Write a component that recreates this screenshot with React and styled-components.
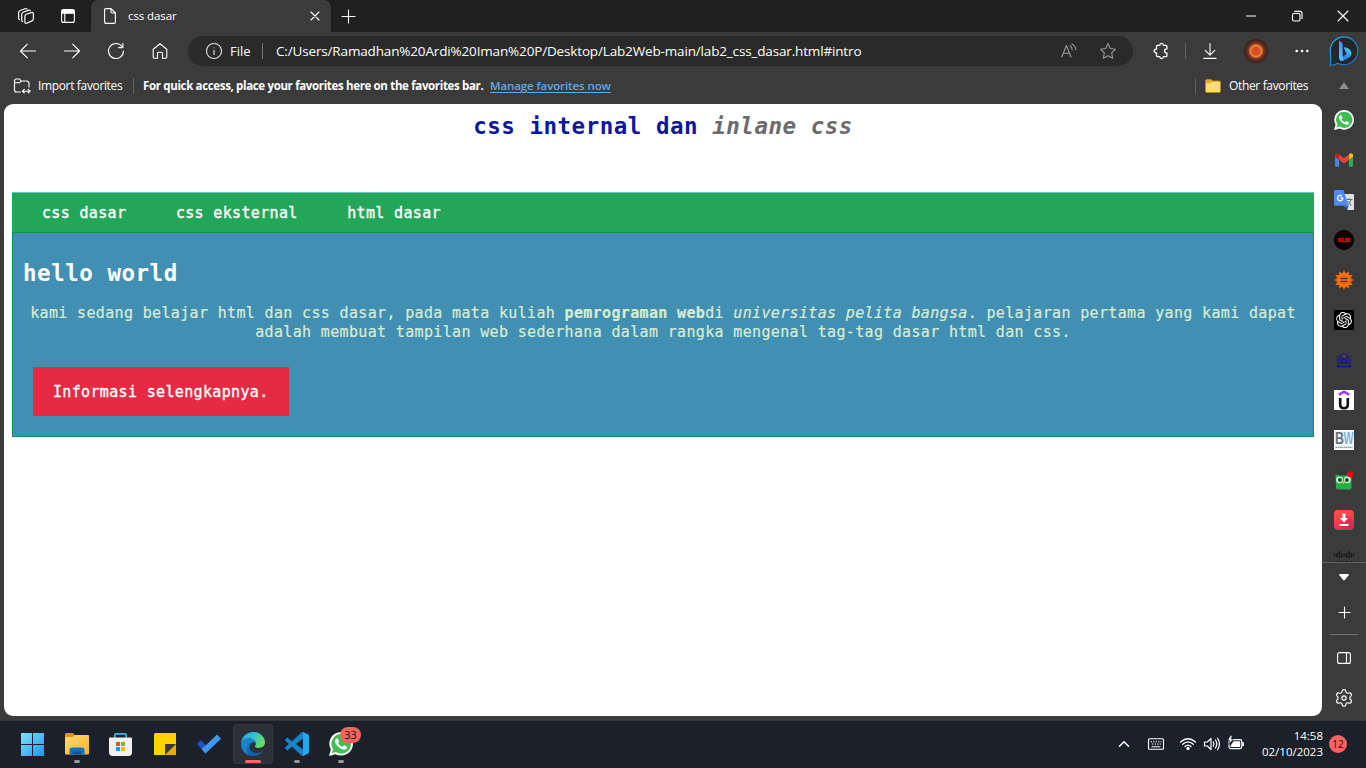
import React from 'react';
import styled, { createGlobalStyle, css } from 'styled-components';
import { SiOpenai } from 'react-icons/si';

const Global = createGlobalStyle`
  *, *::before, *::after { box-sizing: border-box; }
  html, body { margin: 0; padding: 0; background: #3b3b3b; overflow: hidden; }
  svg { display: block; flex: none; overflow: visible; }
`;

const UI = `"Open Sans", "Noto Sans", sans-serif`;
const MONO = `"DejaVu Sans Mono", monospace`;

const Screen = styled.div`
  width: 1366px;
  height: 768px;
  display: grid;
  grid-template-rows: 32px 38px 34px 616px 48px;
  background: #3b3b3b;
  color: #fff;
  font-family: ${UI};
  font-size: 12px;
`;

const Label = styled.span`
  white-space: nowrap;
  font-size: ${(p) => p.$size || 12}px;
  font-weight: ${(p) => p.$weight || 400};
  letter-spacing: ${(p) => p.$track || 0}px;
  color: ${(p) => p.$color || '#fff'};
  line-height: 16px;
`;

const Spacer = styled.div`
  flex: 1;
`;

const Slot = styled.div`
  width: ${(p) => p.$w || 44}px;
  height: ${(p) => p.$h || 32}px;
  flex: none;
  display: flex;
  align-items: center;
  justify-content: center;
`;

const Divider = styled.div`
  width: 1px;
  height: 16px;
  flex: none;
  margin-left: ${(p) => p.$left || 0}px;
  background: ${(p) => p.$color || '#606060'};
`;

/* Tab strip */
const TabStrip = styled.header`
  display: flex;
  background: #202020;
  padding-left: 5px;
`;

const Tab = styled.div`
  width: 240px;
  margin-left: 2px;
  padding: 0 9px 0 13px;
  display: flex;
  align-items: center;
  background: #3b3b3b;
  border-radius: 7px 7px 0 0;
  box-shadow: 0 0 3px rgba(0, 0, 0, 0.45);
  clip-path: inset(0 -4px 0 -4px);
`;

const TabTitle = styled(Label)`
  margin-left: 12px;
  flex: 1;
`;

/* Toolbar */
const Toolbar = styled.div`
  display: flex;
  align-items: center;
  padding-left: 6px;
`;

const AddressBar = styled.div`
  width: 945px;
  height: 30px;
  margin: 0 6px;
  padding: 0 5px 0 18px;
  display: flex;
  align-items: center;
  border-radius: 15px;
  background: #2a2a2a;
`;

const Scheme = styled(Label)`
  margin: 0 10px 0 8px;
  width: 22px;
`;

const Url = styled(Label)`
  margin-left: 13px;
  flex: 1;
`;

const Avatar = styled.div`
  width: 24px;
  height: 24px;
  border-radius: 50%;
  background: radial-gradient(circle, #d94f22 0 4px, #f0903c 5.5px, #a2451f 7px, #5c2c20 9px, #35211f 12px);
`;

/* Favorites bar */
const FavoritesBar = styled.div`
  display: flex;
  align-items: center;
  padding: 0 14px 2px 14px;
`;

const ImportLabel = styled(Label)`
  width: 85px;
  margin: 0 10px 0 8px;
`;

const Hint = styled(Label)`
  width: 341px;
  margin: 0 6px 0 9px;
`;

const ManageLink = styled(Label)`
  text-decoration: underline;
  text-underline-offset: 2px;
`;

const OtherLabel = styled(Label)`
  width: 80px;
  margin: 0 30px 0 8px;
`;

/* Main area */
const Main = styled.div`
  display: flex;
  padding-left: 4px;
`;

const Page = styled.main`
  width: 1318px;
  height: 612px;
  padding: 0 8px;
  border-radius: 9px;
  background: #fff;
  font-family: ${MONO};
  font-size: 15px;
  letter-spacing: 0.344px;
`;

const PageTitle = styled.h1`
  margin: 0;
  height: 88px;
  padding-top: 8px;
  text-align: center;
  color: #0b179d;
  font-size: 22.5px;
  line-height: 28px;
  letter-spacing: 0.517px;

  i { color: #6b6b6b; }
`;

const Nav = styled.nav`
  height: 40px;
  padding: 2px 0 0 30px;
  display: flex;
  gap: 49.5px;
  align-items: center;
  border-top: 1px solid #6cc3d0;
  background: #22a75a;
`;

const NavLink = styled.a`
  color: #fff;
  -webkit-text-stroke: 0.35px #fff;
  line-height: 19px;
`;

const Hero = styled.section`
  height: 205px;
  padding: 0 10px;
  border: 1px solid #0e9150;
  background: #418fb2;
`;

const HeroTitle = styled.h2`
  margin: 0;
  padding-top: 26px;
  font-size: 22.5px;
  line-height: 28px;
  letter-spacing: 0.517px;
`;

const HeroText = styled.p`
  margin: 17px 0 25px;
  text-align: center;
  line-height: 19px;
  color: #d8ecd2;
  -webkit-text-stroke: 0.2px #d8ecd2;
`;

const HeroButton = styled.a`
  display: inline-flex;
  align-items: center;
  height: 49px;
  width: 256px;
  margin-left: 10px;
  padding-left: 20px;
  background: #e42b43;
  color: #fff;
  white-space: nowrap;
  -webkit-text-stroke: 0.35px #fff;
`;

/* Side bar */
const SideBar = styled.aside`
  width: 44px;
  display: flex;
  flex-direction: column;
  align-items: center;
`;

const SideApps = styled.div`
  width: 44px;
  height: 459px;
  padding-top: 6px;
  display: flex;
  flex-direction: column;
  align-items: center;
  gap: 20px;
  overflow: hidden;
  border-bottom: 1px solid #626262;
`;

const SideRule = styled.div`
  width: 28px;
  height: 1px;
  background: #757575;
`;

/* Taskbar */
const TaskBar = styled.footer`
  display: flex;
  align-items: center;
  padding: 0 0 1px 13px;
  background: #1c202a;
  border-top: 1px solid #34373c;
`;

const TaskButton = styled.div`
  position: relative;
  width: 40px;
  height: 40px;
  margin-right: 4px;
  display: flex;
  align-items: center;
  justify-content: center;
  border-radius: 4px;
  ${(p) => p.$active && css`
    background: #2d3039;
    box-shadow: inset 0 0 0 1px #353841;
  `}
`;

const Indicator = styled.span`
  position: absolute;
  bottom: 1px;
  left: 50%;
  transform: translateX(-50%);
  width: ${(p) => (p.$active ? 16 : 6)}px;
  height: 3px;
  border-radius: 2px;
  background: ${(p) => (p.$active ? '#fb6a66' : '#95979b')};
`;

const CountBadge = styled.span`
  position: absolute;
  top: 3px;
  left: 19px;
  width: 21px;
  height: 16px;
  border-radius: 8px;
  background: #fb6360;
  color: #1a0d0d;
  font-size: 11px;
  line-height: 16px;
  text-align: center;
`;

const Clock = styled.div`
  width: 71px;
  margin-left: 4px;
  display: flex;
  flex-direction: column;
  align-items: flex-end;
`;

const Notice = styled.div`
  width: 18px;
  height: 18px;
  margin: 0 19px 0 6px;
  border-radius: 50%;
  background: #fb6360;
  color: #1a0d0d;
  font-size: 10px;
  line-height: 18px;
  text-align: center;
`;

const Line = ({ size = 16, width = 1.1, color = '#fff', box, children }) => (
  <svg width={size} height={size} viewBox={`0 0 ${box || size} ${box || size}`} fill="none" stroke={color}
    strokeWidth={width} strokeLinecap="round" strokeLinejoin="round">{children}</svg>
);

const HANDSET = 'M17.472 14.382c-.297-.149-1.758-.867-2.03-.967-.273-.099-.471-.148-.67.15-.197.297-.767.966-.94 1.164-.173.199-.347.223-.644.075-.297-.15-1.255-.463-2.39-1.475-.883-.788-1.48-1.761-1.653-2.059-.173-.297-.018-.458.13-.606.134-.133.298-.347.446-.52.149-.174.198-.298.298-.497.099-.198.05-.371-.025-.52-.075-.149-.669-1.612-.916-2.207-.242-.579-.487-.5-.669-.51-.173-.008-.371-.01-.57-.01-.198 0-.52.074-.792.372-.272.297-1.04 1.016-1.04 2.479 0 1.462 1.065 2.875 1.213 3.074.149.198 2.096 3.2 5.077 4.487.709.306 1.262.489 1.694.625.712.227 1.36.195 1.871.118.571-.085 1.758-.719 2.006-1.413.248-.694.248-1.289.173-1.413-.074-.124-.272-.198-.57-.347';

const WhatsApp = ({ size }) => (
  <svg width={size} height={size} viewBox="0 0 24 24">
    <path d="M12.2 0A11.8 11.8 0 0 0 1.9 17.6L0 24l6.6-1.8A11.8 11.8 0 1 0 12.2 0z" fill="#fff" />
    <path d="M12.2 2.1A9.7 9.7 0 0 0 4.1 17.2L3 21l4-1.1A9.7 9.7 0 1 0 12.2 2.1z" fill="#40bd53" />
    <path d={HANDSET} fill="#fff" />
  </svg>
);

const Workspaces = () => (
  <Line size={16} width={1.2}>
    <path d="M8.2 6.3 13.4 4.6Q15.6 4 15.400 6V11.200Q15.200 12.400 14 12.900L8.700 15.200Q6.800 15.800 6.900 13.700V8.200Q7 6.800 8.200 6.300Z" />
    <path d="M4.700 13.600Q3.500 13.200 3.700 11.800V6.300Q3.800 4.700 5.200 4.200L10 2.400Q11.500 1.900 12.300 2.700" />
    <path d="M1.600 11.600Q.4 11 .6 9.600V4.600Q.7 3 2.100 2.500L7 .7Q8.300.3 9 .9" />
  </Line>
);
const TabActions = () => (
  <Line size={14}>
    <rect x=".6" y=".6" width="12.8" height="12.8" rx="2" />
    <path d="M1 1.2h12v3H1z" fill="#fff" /><path d="M3.8 4v9" />
  </Line>
);
const DocIcon = () => (
  <svg width="12" height="16" viewBox="0 0 12 16" fill="none" stroke="#fff" strokeWidth="1.1" strokeLinejoin="round">
    <path d="M2 .6H7L11.4 5V14Q11.4 15.4 10 15.4H2Q.6 15.4 .6 14V2Q.6 .6 2 .6ZM7 .6V3.8Q7 5 8.2 5H11.4" />
  </svg>
);
const Cross = ({ size = 8 }) => <Line size={size}><path d={`M0 0 ${size} ${size}M${size} 0 0 ${size}`} /></Line>;
const Plus = ({ size = 13 }) => <Line size={size}><path d={`M${size / 2} 0V${size}M0 ${size / 2}H${size}`} /></Line>;
const Restore = () => (
  <Line size={10}>
    <rect x=".5" y="2.500" width="7.500" height="7.500" rx="1.500" />
    <path d="M2.700.4H8Q10 .4 10 2.400V7.600" />
  </Line>
);
const Arrow = ({ flip }) => (
  <Line size={16}><path d={flip ? 'M.5 8H15.500M8.700 1.200 15.500 8 8.700 14.800' : 'M15.500 8H.5M7.300 1.200.5 8 7.300 14.800'} /></Line>
);
const Refresh = () => (
  <Line size={16}><path d="M14.200 3.800A7.500 7.500 0 1 0 15.500 8M14.900.4V4.600H10.600" /></Line>
);
const Home = () => (
  <Line size={16}>
    <path d="M1.200 6.300 8 .8 14.800 6.300V14Q14.800 15.200 13.700 15.200H10.500V10.500Q10.500 9.300 9.400 9.300H6.600Q5.500 9.300 5.500 10.500V15.200H2.300Q1.200 15.200 1.200 14Z" />
  </Line>
);
const Info = () => (
  <Line size={16} color="#e4e4e4"><circle cx="8" cy="8" r="7.500" /><path d="M8 7.300V11.500M8 4.700V4.800" /></Line>
);
const ReadAloud = () => (
  <Line size={16} color="#9a9a9a">
    <path d="M.8 14 5.400 2.500 10 14M2.400 10.200H8.400M9 2.800Q10.900 4.200 11.200 6.800M11 .9Q14.600 3 14.900 6.800" />
  </Line>
);
const Star = () => (
  <Line size={16} color="#9a9a9a">
    <path d="M8 .6 10.250 5.500 15.500 6.200 11.700 9.900 12.600 15.200 8 12.700 3.400 15.200 4.300 9.900.5 6.200 5.750 5.500Z" />
  </Line>
);
const Puzzle = () => (
  <Line size={16} width={1.300}>
    <path d="M4.700 2.300H6.800Q6.900.4 8.600.4T10.400 2.300H12.700Q13.900 2.300 13.900 3.500V5.900Q11.500 5.900 11.500 8T13.900 10.100V12.500Q13.900 13.700 12.700 13.700H10.400Q10.300 15.500 8.600 15.500T6.800 13.700H4.700Q3.500 13.700 3.500 12.500V9.900Q1.100 9.700 1.100 8T3.500 6.100V3.500Q3.500 2.300 4.700 2.300Z" />
  </Line>
);
const Download = () => (
  <Line size={16}><path d="M8 .5V12M3.200 7.300 8 12.100 12.800 7.300" color="#d0d0d0" /><path d="M2 15.400H14" strokeWidth="1.300" /></Line>
);
const Dots = () => (
  <svg width="14" height="4" viewBox="0 0 14 4" fill="#fff"><circle cx="1.700" cy="2" r="1.300" /><circle cx="7" cy="2" r="1.300" /><circle cx="12.300" cy="2" r="1.300" /></svg>
);
const Bing = () => (
  <svg width="30" height="30" viewBox="0 0 30 30">
    <defs>
      <linearGradient id="ring" x1="0" y1="0" x2="1" y2="1"><stop stopColor="#25b7dc" /><stop offset="1" stopColor="#2457d8" /></linearGradient>
      <linearGradient id="bee" x1="0" y1="1" x2="1" y2="0"><stop stopColor="#2a64f0" /><stop offset=".5" stopColor="#358df2" /><stop offset="1" stopColor="#3ff0dd" /></linearGradient>
      <linearGradient id="stem" x1="0" y1="0" x2="0" y2="1"><stop stopColor="#2a9df4" /><stop offset="1" stopColor="#56c6f6" /></linearGradient>
    </defs>
    <path d="M15.300 .8A14 14 0 1 1 8.500 27.300 Q5 29.500 1 29.200 2.200 25 1.400 17A14 14 0 0 1 15.300 .8Z" fill="#242628" stroke="url(#ring)" strokeWidth="1.200" />
    <path d="M14.800 11.700Q15 11 16 11.300 22.500 13 22.500 17.500 22.500 20 19.500 22L14.500 24.700Q11.500 25.500 10 23L17.500 18Z" fill="url(#bee)" />
    <path d="M10 5.500Q10 4.500 11 5 13.600 6.300 13.600 8V19.500Q13.600 22 14.500 24.600 10 25.500 10 21Z" fill="url(#stem)" />
  </svg>
);
const ImportFolder = () => (
  <Line size={16}>
    <path d="M6.500 14H2.500Q.5 14 .5 12V3Q.5 1 2.500 1H5.500L7.300 3H12.500Q14.800 3 15 5.200V9M.6 4.800H5.200L7.300 3M8.500 13.200H16M10.300 11.300 8.300 13.200 10.300 15M14.200 11.300 16.200 13.200 14.200 15" />
  </Line>
);
const FavFolder = () => (
  <svg width="16" height="14" viewBox="0 0 16 14">
    <path d="M.5 2Q.5.5 2 .5H6L7.500 2H14Q15.500 2 15.500 3.500V12Q15.500 13.500 14 13.500H2Q.5 13.500.5 12Z" fill="#ffdc79" stroke="#bc871a" />
    <path d="M1 1.500Q1 1 2 1H5.700L7 2.400 5.600 4H1Z" fill="#e5a91e" />
  </svg>
);
const Triangle = ({ down, color }) => (
  <svg width="10" height="7" viewBox="0 0 10 7"><path d={down ? 'M.8 0H9.200Q10.300.2 9.600 1.200L5.800 6Q5 6.800 4.200 6L.4 1.200Q-.3.2.8 0Z' : 'M5 -1 10 6H0Z'} fill={color} /></svg>
);

const Gmail = () => (
  <svg width="18" height="20" viewBox="52 42 88 66">
    <path fill="#4285f4" d="M58 108h14V74L52 59v43c0 3.320 2.690 6 6 6" /><path fill="#34a853" d="M120 108h14c3.320 0 6-2.690 6-6V59l-20 15" />
    <path fill="#fbbc04" d="M120 48v26l20-15v-8c0-7.420-8.470-11.650-14.400-7.200" /><path fill="#ea4335" d="M72 74V48l24 18 24-18v26L96 92" />
    <path fill="#c5221f" d="M52 51v8l20 15V48l-5.600-4.200c-5.940-4.450-14.400-.22-14.400 7.200" />
  </svg>
);
const Translate = () => (
  <svg width="20" height="20" viewBox="0 0 20 20">
    <path d="M7 4H19Q20 4 20 5V19Q20 20 19 20H13.500Z" fill="#dfe1e2" />
    <path d="M9 15.500H14.500L13.500 20Z" fill="#3a5bb5" />
    <path d="M1.200 0H9.500L14.500 15.700H1.200Q0 15.700 0 14.500V1.200Q0 0 1.200 0Z" fill="#4c8bf5" />
    <path d="M9 8H6.300M8.900 8.100A2.700 2.700 0 1 1 8 6" fill="none" stroke="#fff" strokeWidth="1.300" />
    <path d="M12.500 9.500H18.500M15 8V9.500M17 9.700Q16 13 13.900 14.800M13.500 11 17.500 15.800" fill="none" stroke="#5c7379" strokeWidth="1" />
  </svg>
);
const RedMark = () => (
  <svg width="20" height="20" viewBox="0 0 20 20">
    <circle cx="10" cy="10" r="10" fill="#000" />
    <text x="10" y="12.100" fontFamily="Liberation Sans" fontWeight="700" fontSize="5.500" textAnchor="middle" textLength="12" lengthAdjust="spacingAndGlyphs" fill="#e50914" stroke="#d00811" strokeWidth=".7">KLIX</text>
  </svg>
);
const burst = Array.from({ length: 24 }, (_, i) => {
  const r = i % 2 ? 6.8 : 9.8;
  const a = (i * Math.PI) / 12;
  return `${(10 + r * Math.sin(a)).toFixed(2)},${(10 - r * Math.cos(a)).toFixed(2)}`;
}).join(' ');
const Burst = () => (
  <svg width="20" height="20" viewBox="0 0 20 20">
    <polygon points={burst} fill="#ff6c00" />
    <path d="M6.500 8.500H13.500M6.500 11.500H13.500" stroke="#4b3428" strokeWidth="1.300" />
  </svg>
);
const AppTile = styled.div`
  width: 20px;
  height: 20px;
  flex: none;
  display: flex;
  align-items: center;
  justify-content: center;
  background: #000;
  color: #fff;
`;
const Campus = () => (
  <svg width="20" height="20" viewBox="0 0 20 20">
    <path d="M4.500 6.500 10 3.200 15.500 6.500 16.800 10 15.500 13 17 17H3L4.500 13 3.200 10Z" fill="#30335a" stroke="#1c1c72" strokeWidth="1" />
    <path d="M3 16.500H17M5 13H15M7 7 5.500 11M13 7 14.500 11M8 13V10L10 8.500 12 10V13" fill="none" stroke="#15157a" strokeWidth="1.200" />
    <path d="M10 4Q11.800 6.500 10 8.500 8.300 6.500 10 4" fill="#a3372f" />
  </svg>
);
const Udemy = () => (
  <svg width="20" height="20" viewBox="0 0 20 20">
    <path d="M0 0H20V20H0Z" fill="#fff" />
    <path d="M4.800 4.800 10 1.600 15.200 4.800" fill="none" stroke="#9d35e8" strokeWidth="2.500" />
    <path d="M6.200 8V14.200Q6.200 18.200 10 18.200T13.800 14.200V8" fill="none" stroke="#111" strokeWidth="2.600" />
  </svg>
);
const BwMark = () => (
  <svg width="20" height="20" viewBox="0 0 20 20">
    <path d="M0 0H20V20H0Z" fill="#f5f7f8" />
    <text x="1" y="14" fontFamily="Liberation Sans" fontWeight="700" fontSize="16" textLength="9" lengthAdjust="spacingAndGlyphs" fill="#66737e">B</text>
    <text x="9.500" y="14" fontFamily="Liberation Sans" fontWeight="700" fontSize="16" textLength="10" lengthAdjust="spacingAndGlyphs" fill="#7eb4d9">W</text>
    <path d="M1.500 17.300H18.500" stroke="#8894a0" strokeWidth="1.200" strokeDasharray="1.500 .5" />
  </svg>
);
const Owl = () => (
  <svg width="20" height="20" viewBox="0 0 20 20">
    <path d="M6 5Q9 0 13 4" fill="none" stroke="#303830" strokeWidth="1.300" />
    <path d="M1.500 4.500 6 5.500H13L17.500 5V18Q17 19.500 15 19.500H4.500Q2 19.500 2 18Z" fill="#24ae4b" />
    <circle cx="5.500" cy="9.800" r="3.400" fill="#d8f4dc" /><circle cx="13.300" cy="9.800" r="3.400" fill="#d8f4dc" />
    <circle cx="5.900" cy="10" r="2" fill="#1c4a2a" /><circle cx="12.900" cy="10" r="2" fill="#1c4a2a" />
    <path d="M8 11.500H11L9.500 14.300Z" fill="#f6b72b" />
    <circle cx="16.200" cy="4.300" r="3" fill="#f00" />
  </svg>
);
const Saver = () => (
  <svg width="20" height="20" viewBox="0 0 20 20">
    <defs><linearGradient id="sv" x1="0" y1="0" x2=".4" y2="1"><stop stopColor="#ff5b38" /><stop offset="1" stopColor="#ee2761" /></linearGradient></defs>
    <rect width="20" height="20" rx="4" fill="url(#sv)" />
    <path d="M11.500 4 20 12V16Q20 20 16 20H10L5.500 15.500Z" fill="#c92b48" opacity=".55" />
    <path d="M8.500 3.500H11.500V8H14.200L10 12.600 5.800 8H8.500ZM5.500 14H14.500V16H5.500Z" fill="#fff" />
  </svg>
);
const Bars = () => (
  <svg width="20" height="20" viewBox="0 0 20 20" stroke="#161616" strokeWidth="1.300" strokeLinecap="round">
    <path d="M.6 4.500V6M3 3.500V7M5.400 1.500V7.500M7.800 3.500V7M10.200 4.500V6M12.600 3.500V7M15 1.500V7.500M17.400 3.500V7M19.500 4.500V6" />
    <text x="10" y="14.500" fontFamily="Liberation Sans" fontWeight="700" fontSize="7.500" textAnchor="middle" textLength="18" lengthAdjust="spacingAndGlyphs" fill="#161616" stroke="none">cisco</text>
  </svg>
);
const Panel = () => <Line size={14}><rect x=".6" y="1.600" width="12.800" height="10.800" rx="2" /><path d="M9.500 1.600V12.400" /></Line>;
const gearPath = 'M9.670 4.136a2.340 2.340 0 0 1 4.659 0 2.340 2.340 0 0 0 3.319 1.915 2.340 2.340 0 0 1 2.330 4.033 2.340 2.340 0 0 0 0 3.831 2.340 2.340 0 0 1-2.330 4.033 2.340 2.340 0 0 0-3.319 1.915 2.340 2.340 0 0 1-4.659 0 2.340 2.340 0 0 0-3.320-1.915 2.340 2.340 0 0 1-2.330-4.033 2.340 2.340 0 0 0 0-3.831A2.340 2.340 0 0 1 6.350 6.051a2.340 2.340 0 0 0 3.319-1.915';
const Gear = () => <Line size={20} box={24} width={1.400}><path d={gearPath} /><circle cx="12" cy="12" r="2.500" /></Line>;

const WindowsLogo = () => (
  <svg width="24" height="23" viewBox="0 0 24 23">
    <defs><linearGradient id="wn" gradientUnits="userSpaceOnUse" x1="0" y1="0" x2="23" y2="23"><stop stopColor="#86dffc" /><stop offset="1" stopColor="#129cf0" /></linearGradient></defs>
    <path d="M0 0H11V11H0ZM12 0H23V11H12ZM0 12H11V23H0ZM12 12H23V23H12Z" fill="url(#wn)" />
  </svg>
);
const Explorer = () => (
  <svg width="24" height="22" viewBox="0 0 24 22">
    <defs><linearGradient id="ex" x1="0" y1="0" x2="1" y2="1"><stop stopColor="#ffdc6b" /><stop offset="1" stopColor="#f8b32c" /></linearGradient></defs>
    <path d="M0 1Q0 0 1.500 0H8L10 2.500 8 5H0Z" fill="#d89616" />
    <path d="M0 4H7.500L10 2H23Q24 2 24 3.200V20.500Q24 21.500 23 21.500H1Q0 21.500 0 20.500Z" fill="url(#ex)" />
    <path d="M4.500 21.500V17Q4.500 14.500 7 14.500H17Q19.500 14.500 19.500 17V21.500Z" fill="#1272c4" /><path d="M7.500 18.500H16.500V21.500H7.500Z" fill="#0d569d" />
  </svg>
);
const Store = () => (
  <svg width="24" height="23" viewBox="0 0 24 23">
    <path d="M5.800 5V2Q5.800.8 7 .8H16Q17.200.8 17.200 2V5" fill="none" stroke="#38b8ec" strokeWidth="1.700" />
    <path d="M0 5.500Q0 4.500 1 4.500H22Q23 4.500 23 5.500V19Q23 23 19.500 23H3.500Q0 23 0 19Z" fill="#f1f1f2" />
    <path d="M7 9H11V13H7Z" fill="#f25022" /><path d="M12 9H16V13H12Z" fill="#7fba00" /><path d="M7 14H11V18H7Z" fill="#00a4ef" /><path d="M12 14H16V18H12Z" fill="#ffb900" />
  </svg>
);
const Sticky = () => (
  <svg width="22" height="22" viewBox="0 0 22 22"><path d="M1 0H22V22H0V1Z" fill="#fdd400" /><path d="M11 11H22V22H11Z" fill="#eba900" /><path d="M11 11H22L11 22Z" fill="#38393c" /></svg>
);
const Todo = () => (
  <svg width="24" height="20" viewBox="0 0 24 20"><path d="M3.700 6 12.500 14.800 8.500 19.400 0 10Z" fill="#1c56bd" /><path d="M20 .5 24 4.800 8.500 19.500 4.600 15.300Z" fill="#3f98ee" /></svg>
);
const Edge = () => (
  <svg width="24" height="24" viewBox="0 0 24 24">
    <defs>
      <linearGradient id="e1" x1="0" y1="0" x2="1" y2=".5"><stop stopColor="#229fdc" /><stop offset=".5" stopColor="#32bfd8" /><stop offset="1" stopColor="#65e05b" /></linearGradient>
      <linearGradient id="e2" x1="0" y1="0" x2="0" y2="1"><stop stopColor="#1583ce" /><stop offset="1" stopColor="#1059a5" /></linearGradient>
    </defs>
    <path d="M0 12A12 12 0 0 1 12 0C19 0 24 5 24 10.300 24 14 21 16 17.500 16 14.500 16 13.500 15 14.200 13.900 16.500 10 12 6 7.500 6.500 3 7 .5 9 0 12Z" fill="url(#e1)" />
    <path d="M0 12C.5 8.500 4 6.500 7.500 6.500 12 6.500 15 9 15 11.500 14 9.500 9 10 8 14 7 19 12 23 16 23.200 8 26 0 20.500 0 12Z" fill="#1684cf" />
    <path d="M10.300 10.500C7 13 7.500 19.500 13.500 20.700 17.500 21.400 20.700 20 22.800 17.500 20.500 22 16.500 24 12.500 24 7 24 4.500 19 5.500 15 6.300 12 8.500 10.500 10.300 10.500Z" fill="url(#e2)" />
  </svg>
);
const VsCode = () => (
  <svg width="24" height="24" viewBox="0 0 24 24">
    <path d="M23.150 2.587 18.210.210a1.494 1.494 0 0 0-1.705.290l-9.460 8.630-4.120-3.128a.999.999 0 0 0-1.276.057L.327 7.261A1 1 0 0 0 .326 8.740L3.899 12 .326 15.260a1 1 0 0 0 .001 1.479L1.650 17.940a.999.999 0 0 0 1.276.057l4.120-3.128 9.460 8.630a1.492 1.492 0 0 0 1.704.290l4.942-2.377A1.500 1.500 0 0 0 24 20.060V3.939a1.500 1.500 0 0 0-.850-1.352zm-5.146 14.861L10.826 12l7.178-5.448v10.896z" fill="#1583cc" />
    <path d="M18.004.1 23.150 2.587A1.500 1.500 0 0 1 24 3.939V20.060a1.500 1.500 0 0 1-.850 1.352L18.004 23.900Z" fill="#2ba3ef" />
  </svg>
);
const Chevron = () => <Line size={10} width={1.500}><path d="M.5 7.300 5 2.800 9.500 7.300" /></Line>;
const Keyboard = () => (
  <Line size={16}><rect x=".5" y="2.700" width="15" height="10.600" rx="1" /><path d="M3 5.800H3.500M5.500 5.800H6M8 5.800H8.500M10.500 5.800H11M13 5.800H13.200M4.300 8H4.800M7 8H7.500M9.500 8H10M12 8H12.500M4 10.700H12" /></Line>
);
const Wifi = () => (
  <Line size={16} width={1.300}><path d="M.6 6Q8-.6 15.400 6M2.700 8.300Q8 3.500 13.300 8.300M5 10.500Q8 7.700 11 10.500" /><circle cx="8" cy="12.400" r="1" fill="#fff" /></Line>
);
const Speaker = () => (
  <Line size={16} width={1.200}><path d="M.5 6H3.300L7 2.500V13.500L3.300 10H.5ZM9.300 5.800Q10.800 8 9.300 10.200M11.500 4Q14 8 11.500 12M13.600 2.200Q17.300 8 13.600 13.800" /></Line>
);
const Battery = () => (
  <svg width="16" height="16" viewBox="0 0 16 16">
    <rect x="1" y="3.600" width="12.800" height="9" rx="1.800" fill="none" stroke="#fff" strokeWidth="1.200" /><path d="M5.500 5.300H12.200V11H2.700V9.500Z" fill="#fff" />
    <path d="M14.300 6.300H15.900V9.900H14.300Z" fill="#fff" /><path d="M2.500-.6-.3 4.600H1.800L.8 8.600 5.300 2.900H3.300L4.200-.6Z" fill="#fff" stroke="#1c202a" strokeWidth=".6" />
  </svg>
);

const sideApps = [Gmail, Translate, RedMark, Burst];
const navItems = ['css dasar', 'css eksternal', 'html dasar'];
const taskItems = [
  { Icon: WindowsLogo }, { Icon: Explorer, open: true }, { Icon: Store }, { Icon: Sticky }, { Icon: Todo },
  { Icon: Edge, open: true, active: true }, { Icon: VsCode, open: true },
  { Icon: () => <WhatsApp size={24} />, open: true, count: 33 },
];

export default function App() {
  return (
    <Screen>
      <Global />
      <TabStrip>
        <Slot $w={42}><Workspaces /></Slot>
        <Slot $w={42}><TabActions /></Slot>
        <Tab>
          <DocIcon />
          <TabTitle $size={11.5} $track={-0.1}>css dasar</TabTitle>
          <Slot $w={14}><Cross /></Slot>
        </Tab>
        <Slot $w={34}><Plus /></Slot>
        <Spacer />
        <Slot $w={46}><Line size={10}><path d="M.5 5H9.500" /></Line></Slot>
        <Slot $w={46}><Restore /></Slot>
        <Slot $w={46}><Cross size={10} /></Slot>
      </TabStrip>

      <Toolbar>
        <Slot><Arrow /></Slot>
        <Slot><Arrow flip /></Slot>
        <Slot><Refresh /></Slot>
        <Slot><Home /></Slot>
        <AddressBar>
          <Info />
          <Scheme $size={13}>File</Scheme>
          <Divider $color="#777" />
          <Url $size={13.5} $track={-0.155}>C:/Users/Ramadhan%20Ardi%20Iman%20P/Desktop/Lab2Web-main/lab2_css_dasar.html#intro</Url>
          <Slot $w={39}><ReadAloud /></Slot>
          <Slot $w={40}><Star /></Slot>
        </AddressBar>
        <Slot><Puzzle /></Slot>
        <Divider $left={2} />
        <Slot $w={48}><Download /></Slot>
        <Slot><Avatar /></Slot>
        <Slot $w={47}><Dots /></Slot>
        <Slot $w={38}><Bing /></Slot>
      </Toolbar>

      <FavoritesBar>
        <ImportFolder />
        <ImportLabel $track={-0.35}>Import favorites</ImportLabel>
        <Divider />
        <Hint $weight={700} $size={11.5} $track={-0.345}>For quick access, place your favorites here on the favorites bar.</Hint>
        <ManageLink $weight={600} $size={11.5} $track={-0.1} $color="#62a8e5">Manage favorites now</ManageLink>
        <Spacer />
        <Divider />
        <Slot $w={9} />
        <FavFolder />
        <OtherLabel $track={-0.35}>Other favorites</OtherLabel>
        <Triangle color="#8c8c8c" />
        <Slot $w={3} />
      </FavoritesBar>

      <Main>
        <Page>
          <PageTitle>css internal dan <i>inlane css</i></PageTitle>
          <Nav>{navItems.map((n) => <NavLink key={n}>{n}</NavLink>)}</Nav>
          <Hero>
            <HeroTitle>hello world</HeroTitle>
            <HeroText>
              kami sedang belajar html dan css dasar, pada mata kuliah <b>pemrograman web</b>di <i>universitas pelita bangsa</i>. pelajaran pertama yang kami dapat adalah membuat tampilan web sederhana dalam rangka mengenal tag-tag dasar html dan css.
            </HeroText>
            <HeroButton>Informasi selengkapnya.</HeroButton>
          </Hero>
        </Page>
        <SideBar>
          <SideApps>
            <WhatsApp size={20} />
            {sideApps.map((Icon, i) => <Icon key={i} />)}
            <AppTile><SiOpenai size={16} /></AppTile>
            <Campus />
            <Udemy />
            <BwMark />
            <Owl />
            <Saver />
            <Bars />
          </SideApps>
          <Slot $h={28}><Triangle down color="#fff" /></Slot>
          <Slot $w={43} $h={43}><Plus size={11} /></Slot>
          <Slot $h={1}><SideRule /></Slot>
          <Slot $h={45}><Panel /></Slot>
          <Slot $h={35}><Gear /></Slot>
        </SideBar>
      </Main>

      <TaskBar>
        {taskItems.map(({ Icon, open, active, count }, i) => (
          <TaskButton key={i} $active={active}>
            <Icon />
            {open && <Indicator $active={active} />}
            {count && <CountBadge>{count}</CountBadge>}
          </TaskButton>
        ))}
        <Spacer />
        <Slot $w={32}><Chevron /></Slot>
        <Slot $w={32}><Keyboard /></Slot>
        <Slot $w={4} />
        <Slot $w={24}><Wifi /></Slot>
        <Slot $w={24}><Speaker /></Slot>
        <Slot $w={24}><Battery /></Slot>
        <Clock>
          <Label $size={11.5}>14:58</Label>
          <Label $size={11.5}>02/10/2023</Label>
        </Clock>
        <Notice>12</Notice>
      </TaskBar>
    </Screen>
  );
}
